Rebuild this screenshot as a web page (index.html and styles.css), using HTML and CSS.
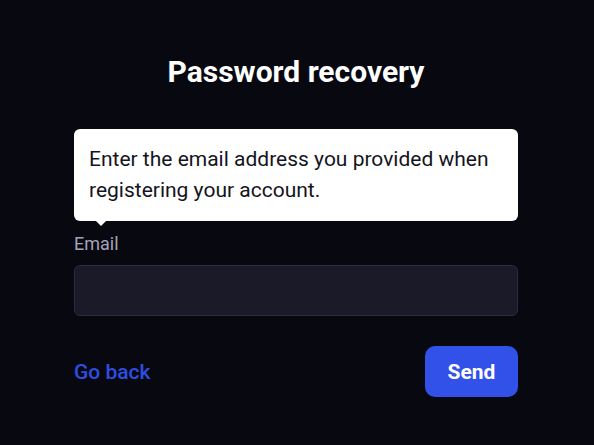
FILE: index.html
```html
<!DOCTYPE html>
<html lang="en">
<head>
<meta charset="utf-8">
<title>Password recovery</title>
<link rel="stylesheet" href="styles.css">
</head>
<body>
<main class="page">
  <h1 class="title">Password recovery</h1>
  <form class="form">
    <div class="tooltip">Enter the email address you provided when registering your account.</div>
    <label class="label" for="email">Email</label>
    <input class="input" id="email" type="email">
    <div class="actions">
      <a class="back" href="#">Go back</a>
      <button class="send" type="button">Send</button>
    </div>
  </form>
</main>
</body>
</html>
```

FILE: styles.css
```css
html, body {
  margin: 0;
  padding: 0;
  background: #080910;
  height: 100%;
}
body {
  font-family: Roboto, "Liberation Sans", sans-serif;
  width: 592px;
}
.page {
  padding-top: 54px;
  display: flex;
  flex-direction: column;
  align-items: center;
}
.title {
  margin: 0;
  font-size: 30px;
  line-height: 36px;
  font-weight: 700;
  color: #ffffff;
}
.form {
  width: 444px;
  margin-top: 39px;
  display: flex;
  flex-direction: column;
}
.tooltip {
  position: relative;
  background: #ffffff;
  color: #14141c;
  border-radius: 6px;
  padding: 15px 15px 15px;
  font-size: 21px;
  line-height: 31px;
}
.tooltip::after {
  content: "";
  position: absolute;
  left: 22px;
  bottom: -5px;
  width: 0;
  height: 0;
  border-left: 5px solid transparent;
  border-right: 5px solid transparent;
  border-top: 5px solid #ffffff;
}
.label {
  margin-top: 12px;
  font-size: 18px;
  line-height: 22px;
  color: #a4a3b8;
}
.input {
  margin-top: 10px;
  height: 51px;
  box-sizing: border-box;
  background: #1a1a28;
  border: 1px solid #2d2c40;
  border-radius: 6px;
  outline: none;
  color: #ffffff;
  font-family: inherit;
  font-size: 18px;
  padding: 0 14px;
}
.actions {
  margin-top: 30px;
  display: flex;
  justify-content: space-between;
  align-items: center;
}
.back {
  color: #2f4de0;
  font-size: 21px;
  font-weight: 500;
  text-decoration: none;
}
.send {
  width: 93px;
  height: 51px;
  border: none;
  border-radius: 10px;
  background: #3151e9;
  color: #ffffff;
  font-family: inherit;
  font-size: 21px;
  font-weight: 700;
  cursor: pointer;
}
```
